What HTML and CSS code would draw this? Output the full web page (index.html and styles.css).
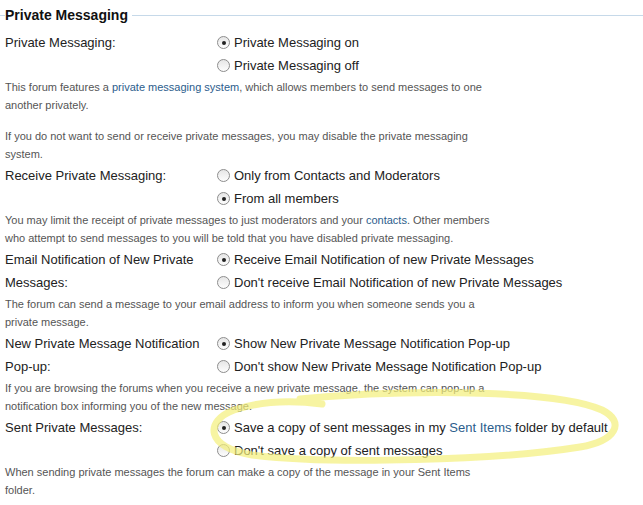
FILE: index.html
```html
<!DOCTYPE html>
<html lang="en">
<head>
    <meta charset="UTF-8">
    <meta name="viewport" content="width=device-width, initial-scale=1.0">
    <title>Private Messaging</title>
    <link rel="stylesheet" href="styles.css">
</head>
<body>

<fieldset class="prefs">
    <legend>Private Messaging</legend>

    <div class="pref-row">
        <div class="pref-label">Private Messaging:</div>
        <div class="pref-options">
            <div class="option"><span class="radio checked"></span>Private Messaging on</div>
            <div class="option"><span class="radio"></span>Private Messaging off</div>
        </div>
    </div>
    <p class="desc">This forum features a <a href="#">private messaging system</a>, which allows members to send messages to one another privately.</p>
    <p class="desc gap">If you do not want to send or receive private messages, you may disable the private messaging system.</p>

    <div class="pref-row">
        <div class="pref-label">Receive Private Messaging:</div>
        <div class="pref-options">
            <div class="option"><span class="radio"></span>Only from Contacts and Moderators</div>
            <div class="option"><span class="radio checked"></span>From all members</div>
        </div>
    </div>
    <p class="desc">You may limit the receipt of private messages to just moderators and your <a href="#">contacts</a>. Other members who attempt to send messages to you will be told that you have disabled private messaging.</p>

    <div class="pref-row">
        <div class="pref-label">Email Notification of New Private Messages:</div>
        <div class="pref-options">
            <div class="option"><span class="radio checked"></span>Receive Email Notification of new Private Messages</div>
            <div class="option"><span class="radio"></span>Don't receive Email Notification of new Private Messages</div>
        </div>
    </div>
    <p class="desc">The forum can send a message to your email address to inform you when someone sends you a private message.</p>

    <div class="pref-row">
        <div class="pref-label">New Private Message Notification Pop-up:</div>
        <div class="pref-options">
            <div class="option"><span class="radio checked"></span>Show New Private Message Notification Pop-up</div>
            <div class="option"><span class="radio"></span>Don't show New Private Message Notification Pop-up</div>
        </div>
    </div>
    <p class="desc">If you are browsing the forums when you receive a new private message, the system can pop-up a notification box informing you of the new message.</p>

    <div class="pref-row">
        <div class="pref-label">Sent Private Messages:</div>
        <div class="pref-options">
            <div class="option"><span class="radio checked"></span>Save a copy of sent messages in my&nbsp;<a href="#">Sent Items</a>&nbsp;folder by default</div>
            <div class="option"><span class="radio"></span>Don't save a copy of sent messages</div>
        </div>
    </div>
    <p class="desc">When sending private messages the forum can make a copy of the message in your Sent Items folder.</p>
</fieldset>

<!-- highlighter scribble over the last setting -->
<svg class="scribble" width="643" height="505" viewBox="0 0 643 505">
    <path d="M 300 399 C 420 388, 560 391, 602 410 C 626 422, 616 441, 580 447 C 500 460, 330 465, 252 455 C 206 448, 204 421, 234 410 C 258 402, 290 400, 322 404"
          fill="none" stroke="#f4f07a" stroke-opacity="0.7" stroke-width="7" stroke-linecap="round"/>
</svg>

</body>
</html>
```

FILE: styles.css
```css
body {
    margin: 0;
    font-family: "Liberation Sans", Arial, sans-serif;
    color: #222;
    background: #fff;
    position: relative;
}
a {
    color: #2b5d8c;
    text-decoration: none;
}
.prefs {
    margin: 7px 0 0;
    padding: 7px 0 0 5px;
    border: none;
    border-top: 1px solid #c6d9e9;
}
.prefs legend {
    padding: 0 4px 0 0;
    font-size: 14px;
    font-weight: bold;
    color: #111;
    line-height: 17px;
}
.pref-row {
    display: grid;
    grid-template-columns: 212px 1fr;
    font-size: 13px;
    line-height: 23px;
}
.pref-label {
    padding-right: 12px;
}
.option {
    display: flex;
    align-items: center;
    white-space: nowrap;
}
.radio {
    width: 11px;
    height: 11px;
    border: 1px solid #8d8d8d;
    border-radius: 50%;
    background: linear-gradient(#e6e6e6, #fdfdfd);
    margin-right: 4px;
    display: flex;
    align-items: center;
    justify-content: center;
    flex: none;
}
.radio.checked::after {
    content: "";
    width: 4px;
    height: 4px;
    border-radius: 50%;
    background: #222;
}
.desc {
    max-width: 488px;
    margin: 1px 0 1px;
    font-size: 11px;
    line-height: 18px;
    color: #555;
}
.desc.gap {
    margin-top: 13px;
}
.scribble {
    position: absolute;
    left: 0;
    top: 0;
    pointer-events: none;
}
```
